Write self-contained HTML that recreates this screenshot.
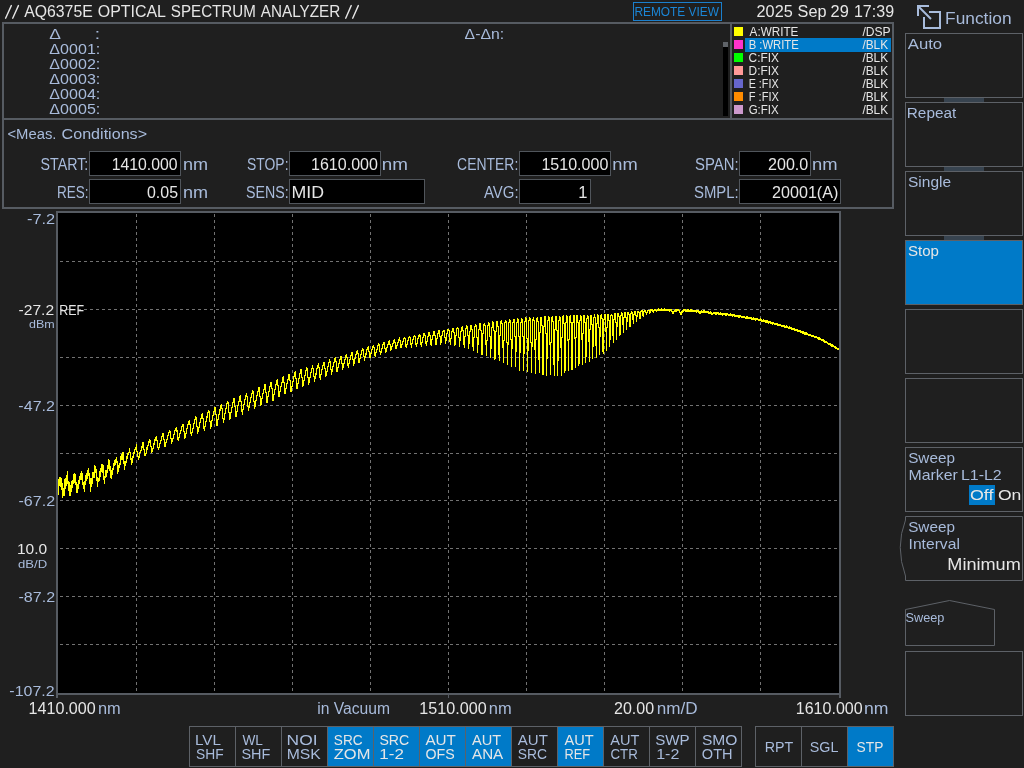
<!DOCTYPE html><html><head><meta charset="utf-8"><style>html,body{margin:0;padding:0;background:#1f1f1f;width:1024px;height:768px;overflow:hidden}svg{display:block;will-change:transform}text{font-family:"Liberation Sans",sans-serif;white-space:pre}</style></head><body>
<svg width="1024" height="768" viewBox="0 0 1024 768">
<rect x="0" y="0" width="1024" height="768" fill="#1f1f1f"/>
<path d="M5.6 18.2L11.3 5.6M12.7 18.2L18.4 5.6M345.7 18.2L351.2 5.6M352.7 18.2L358.3 5.6" stroke="#e6e6e6" stroke-width="1.4" stroke-linecap="round" fill="none"/>
<rect x="633.5" y="2.5" width="88" height="18" fill="none" stroke="#1b7fcc" stroke-width="1"/>
<g fill="none" stroke="#a8bcdc" stroke-width="2"><path d="M918 16V6H929"/><path d="M918 6L931 19"/><path d="M929 12H940V28H924V17"/></g>
<rect x="3" y="23" width="890" height="96" fill="none" stroke="#565b62" stroke-width="2"/>
<rect x="730" y="23" width="2" height="95" fill="#565b62"/>
<rect x="723" y="42" width="5" height="74" fill="#000"/>
<rect x="723" y="42" width="5" height="5" fill="#5f6368"/>
<rect x="734" y="27" width="9" height="9" fill="#ffff00"/>
<rect x="734" y="40" width="9" height="9" fill="#ff33cc"/>
<rect x="734" y="53" width="9" height="9" fill="#00ff00"/>
<rect x="734" y="66" width="9" height="9" fill="#ff9999"/>
<rect x="734" y="79" width="9" height="9" fill="#6666cc"/>
<rect x="734" y="92" width="9" height="9" fill="#ff8c00"/>
<rect x="734" y="105" width="9" height="9" fill="#cc99cc"/>
<rect x="745" y="38" width="146" height="14" fill="#007ac8"/>
<rect x="3" y="119" width="890" height="89" fill="none" stroke="#565b62" stroke-width="2"/>
<rect x="89.5" y="151.5" width="91" height="24" fill="#000" stroke="#50555b" stroke-width="1"/>
<rect x="89.5" y="179.5" width="91" height="24" fill="#000" stroke="#50555b" stroke-width="1"/>
<rect x="289.5" y="151.5" width="91" height="24" fill="#000" stroke="#50555b" stroke-width="1"/>
<rect x="289.5" y="179.5" width="135" height="24" fill="#000" stroke="#50555b" stroke-width="1"/>
<rect x="519.5" y="151.5" width="91" height="24" fill="#000" stroke="#50555b" stroke-width="1"/>
<rect x="519.5" y="179.5" width="71" height="24" fill="#000" stroke="#50555b" stroke-width="1"/>
<rect x="739.5" y="151.5" width="71" height="24" fill="#000" stroke="#50555b" stroke-width="1"/>
<rect x="739.5" y="179.5" width="101" height="24" fill="#000" stroke="#50555b" stroke-width="1"/>
<rect x="57" y="212" width="783" height="482" fill="#000" stroke="#565b62" stroke-width="2"/>
<rect x="56" y="694" width="2" height="4" fill="#565b62"/><rect x="839" y="694" width="2" height="4" fill="#565b62"/><rect x="448" y="695" width="1" height="3" fill="#565b62"/>
<path d="M136.5 214V693M214.5 214V693M292.5 214V693M370.5 214V693M448.5 214V693M526.5 214V693M604.5 214V693M682.5 214V693M760.5 214V693" stroke="#727272" stroke-width="1" stroke-dasharray="3 3" fill="none"/>
<path d="M58 261.5H838M58 309.5H838M58 357.5H838M58 405.5H838M58 453.5H838M58 500.5H838M58 548.5H838M58 596.5H838M58 644.5H838" stroke="#727272" stroke-width="1" stroke-dasharray="3 3" stroke-dashoffset="4" fill="none"/>
<path d="M58.5 479V495M59.5 477V486M60.5 477V487M61.5 478V490M62.5 483V498M63.5 488V496M64.5 479V496M65.5 478V489M66.5 475V486M67.5 471V484M68.5 481V491M69.5 482V496M70.5 485V496M71.5 481V492M72.5 480V488M73.5 474V484M74.5 473V483M75.5 474V485M76.5 482V493M77.5 484V493M78.5 480V489M79.5 476V484M80.5 473V480M81.5 471V480M82.5 473V485M83.5 482V489M84.5 481V492M85.5 475V485M86.5 473V481M87.5 470V479M88.5 468V476M89.5 473V484M90.5 478V492M91.5 478V487M92.5 472V484M93.5 472V478M94.5 465V478M95.5 466V473M96.5 469V481M97.5 477V487M98.5 478V482M99.5 471V481M100.5 468V477M101.5 464V472M102.5 464V473M103.5 465V480M104.5 476V484M105.5 470V478M106.5 470V477M107.5 465V473M108.5 459V469M109.5 460V471M110.5 466V478M111.5 470V479M112.5 468V475M113.5 463V470M114.5 460V466M115.5 459V465M116.5 457V463M117.5 461V474M118.5 465V472M119.5 463V468M120.5 456V465M121.5 454V460M122.5 452V460M123.5 452V464M124.5 461V470M125.5 461V466M126.5 456V463M127.5 453V459M128.5 452V455M129.5 448V453M130.5 452V460M131.5 458V465M132.5 456V463M133.5 452V458M134.5 449V454M135.5 447V450M136.5 444V452M137.5 451V457M138.5 456V460M139.5 452V458M140.5 450V453M141.5 446V451M142.5 442V448M143.5 442V450M144.5 449V456M145.5 453V456M146.5 447V454M147.5 445V450M148.5 441V446M149.5 439V443M150.5 440V447M151.5 446V453M152.5 448V452M153.5 443V449M154.5 439V445M155.5 437V441M156.5 436V441M157.5 440V448M158.5 447V450M159.5 443V448M160.5 440V444M161.5 436V441M162.5 433V437M163.5 433V440M164.5 439V447M165.5 442V447M166.5 439V443M167.5 435V440M168.5 432V436M169.5 430V433M170.5 431V439M171.5 438V444M172.5 438V442M173.5 434V439M174.5 430V435M175.5 428V431M176.5 427V432M177.5 430V440M178.5 437V441M179.5 433V438M180.5 430V434M181.5 426V431M182.5 424V427M183.5 424V432M184.5 431V439M185.5 433V438M186.5 428V434M187.5 424V429M188.5 421V425M189.5 420V425M190.5 424V434M191.5 432V436M192.5 428V433M193.5 423V429M194.5 419V424M195.5 416V420M196.5 417V427M197.5 426V434M198.5 427V432M199.5 422V428M200.5 418V423M201.5 414V419M202.5 413V419M203.5 418V429M204.5 426V431M205.5 421V427M206.5 416V422M207.5 412V418M208.5 410V413M209.5 411V422M210.5 421V429M211.5 420V427M212.5 415V421M213.5 411V416M214.5 407V412M215.5 407V415M216.5 414V426M217.5 419V426M218.5 414V420M219.5 409V415M220.5 405V411M221.5 404V409M222.5 408V419M223.5 418V423M224.5 413V420M225.5 408V414M226.5 403V409M227.5 401V404M228.5 402V413M229.5 412V420M230.5 412V419M231.5 407V413M232.5 402V408M233.5 398V403M234.5 398V407M235.5 406V417M236.5 411V417M237.5 405V412M238.5 401V406M239.5 396V402M240.5 395V402M241.5 401V412M242.5 409V415M243.5 404V410M244.5 399V405M245.5 395V400M246.5 393V397M247.5 396V407M248.5 406V411M249.5 402V408M250.5 397V403M251.5 393V398M252.5 390V394M253.5 391V402M254.5 401V409M255.5 400V407M256.5 395V401M257.5 391V396M258.5 387V392M259.5 387V397M260.5 396V406M261.5 398V405M262.5 393V399M263.5 389V394M264.5 384V390M265.5 384V393M266.5 392V403M267.5 396V403M268.5 391V397M269.5 386V392M270.5 382V387M271.5 382V389M272.5 388V401M273.5 394V401M274.5 389V395M275.5 384V390M276.5 380V385M277.5 379V386M278.5 385V397M279.5 391V397M280.5 386V392M281.5 382V387M282.5 377V383M283.5 376V383M284.5 382V394M285.5 388V394M286.5 383V389M287.5 379V384M288.5 374V380M289.5 374V381M290.5 380V392M291.5 386V392M292.5 381V387M293.5 376V382M294.5 372V377M295.5 371V379M296.5 378V389M297.5 383V389M298.5 378V384M299.5 373V379M300.5 369V374M301.5 369V378M302.5 377V387M303.5 380V386M304.5 375V381M305.5 370V376M306.5 367V371M307.5 368V378M308.5 377V385M309.5 377V383M310.5 372V378M311.5 368V373M312.5 365V369M313.5 368V377M314.5 376V382M315.5 373V379M316.5 368V375M317.5 365V369M318.5 363V368M319.5 367V378M320.5 374V380M321.5 369V375M322.5 365V370M323.5 362V366M324.5 362V369M325.5 368V377M326.5 371V376M327.5 366V372M328.5 362V367M329.5 359V363M330.5 361V370M331.5 369V375M332.5 366V372M333.5 362V367M334.5 358V363M335.5 357V362M336.5 361V372M337.5 367V372M338.5 363V368M339.5 359V364M340.5 356V360M341.5 356V364M342.5 363V370M343.5 363V368M344.5 359V364M345.5 355V360M346.5 354V358M347.5 357V366M348.5 363V368M349.5 359V364M350.5 355V360M351.5 352V356M352.5 352V360M353.5 359V366M354.5 358V364M355.5 354V359M356.5 351V355M357.5 350V354M358.5 353V363M359.5 358V363M360.5 354V359M361.5 350V355M362.5 348V351M363.5 349V357M364.5 356V361M365.5 353V358M366.5 349V355M367.5 347V350M368.5 346V352M369.5 351V358M370.5 353V358M371.5 349V354M372.5 346V350M373.5 345V348M374.5 347V356M375.5 352V357M376.5 349V353M377.5 345V350M378.5 343V346M379.5 344V352M380.5 351V355M381.5 348V353M382.5 344V349M383.5 342V345M384.5 342V349M385.5 348V353M386.5 347V352M387.5 344V348M388.5 341V345M389.5 340V345M390.5 344V351M391.5 346V350M392.5 343V347M393.5 340V344M394.5 339V343M395.5 342V349M396.5 345V349M397.5 342V346M398.5 339V343M399.5 337V341M400.5 340V348M401.5 344V348M402.5 341V345M403.5 338V342M404.5 337V339M405.5 338V347M406.5 344V348M407.5 340V345M408.5 337V341M409.5 336V338M410.5 337V345M411.5 343V348M412.5 339V344M413.5 336V340M414.5 335V337M415.5 336V345M416.5 343V347M417.5 338V344M418.5 335V339M419.5 334V337M420.5 335V345M421.5 342V347M422.5 337V343M423.5 333V338M424.5 333V336M425.5 335V344M426.5 341V346M427.5 336V342M428.5 332V337M429.5 332V336M430.5 335V345M431.5 339V346M432.5 335V340M433.5 331V336M434.5 331V336M435.5 335V345M436.5 338V345M437.5 333V339M438.5 330V334M439.5 330V337M440.5 336V345M441.5 335V343M442.5 331V336M443.5 330V332M444.5 330V338M445.5 337V344M446.5 333V341M447.5 329V334M448.5 329V331M449.5 330V342M450.5 338V345M451.5 331V339M452.5 328V332M453.5 328V333M454.5 332V346M455.5 335V345M456.5 328V336M457.5 327V329M458.5 328V338M459.5 337V347M460.5 331V341M461.5 327V332M462.5 326V331M463.5 330V345M464.5 336V348M465.5 328V337M466.5 325V329M467.5 326V336M468.5 335V349M469.5 331V344M470.5 325V332M471.5 325V330M472.5 329V347M473.5 337V351M474.5 326V338M475.5 324V327M476.5 325V338M477.5 337V353M478.5 329V345M479.5 323V330M480.5 323V331M481.5 330V355M482.5 333V355M483.5 324V334M484.5 323V326M485.5 325V345M486.5 340V356M487.5 325V341M488.5 322V326M489.5 323V337M490.5 336V358M491.5 327V349M492.5 321V328M493.5 322V331M494.5 330V360M495.5 331V359M496.5 321V332M497.5 321V327M498.5 326V355M499.5 335V361M500.5 321V336M501.5 320V324M502.5 323V348M503.5 340V363M504.5 322V341M505.5 320V323M506.5 321V343M507.5 342V365M508.5 322V345M509.5 319V323M510.5 320V340M511.5 339V367M512.5 322V349M513.5 319V323M514.5 319V337M515.5 336V367M516.5 322V352M517.5 318V323M518.5 319V337M519.5 336V371M520.5 322V353M521.5 318V323M522.5 319V337M523.5 336V371M524.5 321V354M525.5 317V322M526.5 318V339M527.5 338V372M528.5 320V351M529.5 317V321M530.5 318V343M531.5 342V373M532.5 319V347M533.5 317V321M534.5 320V350M535.5 339V374M536.5 318V340M537.5 317V322M538.5 321V360M539.5 332V373M540.5 317V333M541.5 317V326M542.5 325V375M543.5 326V375M544.5 316V327M545.5 316V334M546.5 333V376M547.5 320V359M548.5 316V321M549.5 317V345M550.5 342V375M551.5 317V343M552.5 316V322M553.5 321V365M554.5 329V376M555.5 316V330M556.5 316V331M557.5 330V376M558.5 320V361M559.5 316V321M560.5 317V348M561.5 337V376M562.5 316V338M563.5 315V324M564.5 323V373M565.5 322V371M566.5 315V323M567.5 316V341M568.5 339V371M569.5 316V340M570.5 315V323M571.5 322V370M572.5 322V370M573.5 315V323M574.5 315V339M575.5 337V368M576.5 315V338M577.5 315V323M578.5 322V366M579.5 320V364M580.5 315V321M581.5 316V340M582.5 333V365M583.5 315V334M584.5 315V323M585.5 322V363M586.5 318V357M587.5 315V319M588.5 316V342M589.5 329V362M590.5 315V330M591.5 315V325M592.5 324V359M593.5 317V347M594.5 314V318M595.5 317V346M596.5 323V358M597.5 314V324M598.5 315V328M599.5 327V355M600.5 315V337M601.5 314V319M602.5 318V352M603.5 319V354M604.5 314V320M605.5 314V332M606.5 327V351M607.5 314V328M608.5 314V321M609.5 320V347M610.5 315V340M611.5 314V316M612.5 315V336M613.5 319V343M614.5 313V320M615.5 313V323M616.5 322V340M617.5 313V327M618.5 313V317M619.5 316V336M620.5 315V335M621.5 312V316M622.5 313V325M623.5 317V333M624.5 312V318M625.5 312V318M626.5 317V330M627.5 312V322M628.5 312V315M629.5 314V327M630.5 313V327M631.5 311V314M632.5 312V320M633.5 314V324M634.5 311V315M635.5 311V316M636.5 315V322M637.5 311V317M638.5 311V313M639.5 312V319M640.5 311V319M641.5 310V312M642.5 310V316M643.5 311V317M644.5 310V312M645.5 310V313M646.5 312V315M647.5 310V313M648.5 310V311M649.5 310V314M650.5 309V313M651.5 309V311M652.5 309V312M653.5 310V313M654.5 309V311M655.5 309V311M656.5 310V312M657.5 309V311M658.5 308V311M659.5 309V311M660.5 309V311M661.5 308V311M662.5 309V311M663.5 309V311M664.5 308V311M665.5 309V311M666.5 309V311M667.5 309V311M668.5 309V311M669.5 309V312M670.5 309V311M671.5 309V312M672.5 311V314M673.5 311V314M674.5 310V312M675.5 309V312M676.5 309V312M677.5 309V311M678.5 309V311M679.5 310V313M680.5 312V315M681.5 311V315M682.5 310V313M683.5 309V312M684.5 309V311M685.5 309V312M686.5 310V312M687.5 309V312M688.5 309V312M689.5 310V312M690.5 309V312M691.5 309V312M692.5 310V312M693.5 310V312M694.5 310V312M695.5 310V312M696.5 310V313M697.5 310V312M698.5 310V313M699.5 311V314M700.5 311V314M701.5 310V313M702.5 311V313M703.5 310V313M704.5 310V313M705.5 311V313M706.5 311V313M707.5 311V313M708.5 311V314M709.5 312V314M710.5 311V314M711.5 312V315M712.5 313V315M713.5 312V314M714.5 312V314M715.5 312V315M716.5 312V315M717.5 312V314M718.5 312V315M719.5 313V315M720.5 312V315M721.5 313V315M722.5 313V316M723.5 313V315M724.5 313V315M725.5 313V316M726.5 313V316M727.5 313V315M728.5 314V316M729.5 314V316M730.5 313V316M731.5 314V316M732.5 314V317M733.5 314V316M734.5 314V317M735.5 315V317M736.5 315V317M737.5 315V317M738.5 315V318M739.5 315V318M740.5 315V317M741.5 316V318M742.5 316V318M743.5 316V318M744.5 316V318M745.5 317V319M746.5 316V319M747.5 316V319M748.5 317V319M749.5 317V319M750.5 317V319M751.5 317V320M752.5 318V320M753.5 317V320M754.5 318V320M755.5 318V321M756.5 318V320M757.5 318V320M758.5 319V321M759.5 319V321M760.5 318V321M761.5 319V322M762.5 320V322M763.5 319V322M764.5 320V322M765.5 320V323M766.5 320V323M767.5 320V323M768.5 321V324M769.5 321V323M770.5 321V324M771.5 322V324M772.5 322V325M773.5 322V324M774.5 323V325M775.5 323V325M776.5 323V325M777.5 323V326M778.5 324V326M779.5 324V326M780.5 324V326M781.5 325V327M782.5 325V327M783.5 325V327M784.5 325V328M785.5 326V328M786.5 325V328M787.5 326V328M788.5 327V329M789.5 326V329M790.5 327V329M791.5 327V330M792.5 328V330M793.5 328V330M794.5 328V331M795.5 329V331M796.5 329V331M797.5 329V332M798.5 330V332M799.5 330V332M800.5 330V333M801.5 331V333M802.5 331V334M803.5 331V334M804.5 332V335M805.5 332V335M806.5 332V335M807.5 333V335M808.5 334V336M809.5 334V336M810.5 334V336M811.5 335V337M812.5 335V337M813.5 335V337M814.5 336V338M815.5 336V338M816.5 336V338M817.5 337V339M818.5 337V340M819.5 337V340M820.5 338V340M821.5 339V341M822.5 339V341M823.5 339V342M824.5 340V343M825.5 341V343M826.5 341V343M827.5 342V344M828.5 343V345M829.5 343V345M830.5 343V346M831.5 344V347M832.5 344V347M833.5 345V347M834.5 346V348M835.5 346V349M836.5 347V349M837.5 348V350M838.5 348V350" stroke="#ffff00" stroke-width="1" fill="none" shape-rendering="crispEdges"/>
<rect x="905.5" y="33.5" width="117" height="64" fill="none" stroke="#5d6167" stroke-width="1"/>
<rect x="905.5" y="102.5" width="117" height="64" fill="none" stroke="#5d6167" stroke-width="1"/>
<rect x="905.5" y="171.5" width="117" height="64" fill="none" stroke="#5d6167" stroke-width="1"/>
<rect x="905.5" y="240.5" width="117" height="64" fill="#007ac8" stroke="#5d6167" stroke-width="1"/>
<rect x="905.5" y="309.5" width="117" height="64" fill="none" stroke="#5d6167" stroke-width="1"/>
<rect x="905.5" y="378.5" width="117" height="64" fill="none" stroke="#5d6167" stroke-width="1"/>
<rect x="905.5" y="447.5" width="117" height="64" fill="none" stroke="#5d6167" stroke-width="1"/>
<path d="M905.5 516.5H1022.5V580.5H905.5V576Q895 547 905.5 520Z" fill="none" stroke="#5d6167" stroke-width="1"/>
<rect x="944" y="98" width="40" height="4" fill="#37434f"/>
<rect x="944" y="167" width="40" height="4" fill="#37434f"/>
<rect x="944" y="236" width="40" height="4" fill="#37434f"/>
<rect x="969" y="485" width="26" height="20" fill="#007ac8"/>
<path d="M905.5 609.5L949.5 600.5L994.5 609.5V645.5H905.5Z" fill="none" stroke="#5d6167" stroke-width="1"/>
<rect x="905.5" y="651.5" width="117" height="64" fill="none" stroke="#5d6167" stroke-width="1"/>
<rect x="189.5" y="726.5" width="46" height="40" fill="#1f1f1f" stroke="#5d6167" stroke-width="1"/>
<rect x="235.5" y="726.5" width="46" height="40" fill="#1f1f1f" stroke="#5d6167" stroke-width="1"/>
<rect x="281.5" y="726.5" width="46" height="40" fill="#1f1f1f" stroke="#5d6167" stroke-width="1"/>
<rect x="327.5" y="726.5" width="46" height="40" fill="#007ac8" stroke="#5d6167" stroke-width="1"/>
<rect x="373.5" y="726.5" width="46" height="40" fill="#007ac8" stroke="#5d6167" stroke-width="1"/>
<rect x="419.5" y="726.5" width="46" height="40" fill="#007ac8" stroke="#5d6167" stroke-width="1"/>
<rect x="465.5" y="726.5" width="46" height="40" fill="#007ac8" stroke="#5d6167" stroke-width="1"/>
<rect x="511.5" y="726.5" width="46" height="40" fill="#1f1f1f" stroke="#5d6167" stroke-width="1"/>
<rect x="557.5" y="726.5" width="46" height="40" fill="#007ac8" stroke="#5d6167" stroke-width="1"/>
<rect x="603.5" y="726.5" width="46" height="40" fill="#1f1f1f" stroke="#5d6167" stroke-width="1"/>
<rect x="649.5" y="726.5" width="46" height="40" fill="#1f1f1f" stroke="#5d6167" stroke-width="1"/>
<rect x="695.5" y="726.5" width="46" height="40" fill="#1f1f1f" stroke="#5d6167" stroke-width="1"/>
<rect x="755.5" y="726.5" width="46" height="40" fill="#1f1f1f" stroke="#5d6167" stroke-width="1"/>
<rect x="801.5" y="726.5" width="46" height="40" fill="#1f1f1f" stroke="#5d6167" stroke-width="1"/>
<rect x="847.5" y="726.5" width="46" height="40" fill="#007ac8" stroke="#5d6167" stroke-width="1"/>
<text x="24.20" y="16.50" font-size="16" fill="#e6e6e6" textLength="68.57" lengthAdjust="spacingAndGlyphs">AQ6375E</text>
<text x="97.80" y="16.50" font-size="16" fill="#e6e6e6" textLength="68.17" lengthAdjust="spacingAndGlyphs">OPTICAL</text>
<text x="170.83" y="16.50" font-size="16" fill="#e6e6e6" textLength="84.99" lengthAdjust="spacingAndGlyphs">SPECTRUM</text>
<text x="260.80" y="16.50" font-size="16" fill="#e6e6e6" textLength="79.42" lengthAdjust="spacingAndGlyphs">ANALYZER</text>
<text x="634.47" y="15.70" font-size="12.6" fill="#1b86d6" textLength="84.47" lengthAdjust="spacingAndGlyphs">REMOTE VIEW</text>
<text x="756.57" y="16.60" font-size="15.6" fill="#e6e6e6" textLength="36.18" lengthAdjust="spacingAndGlyphs">2025</text>
<text x="797.57" y="16.60" font-size="15.6" fill="#e6e6e6" textLength="28.92" lengthAdjust="spacingAndGlyphs">Sep</text>
<text x="830.56" y="16.60" font-size="15.6" fill="#e6e6e6" textLength="18.23" lengthAdjust="spacingAndGlyphs">29</text>
<text x="853.96" y="16.60" font-size="15.6" fill="#e6e6e6" textLength="40.09" lengthAdjust="spacingAndGlyphs">17:39</text>
<text x="945.10" y="23.60" font-size="16.2" fill="#a8bbdb" textLength="66.44" lengthAdjust="spacingAndGlyphs">Function</text>
<text x="49.28" y="39.00" font-size="15.3" fill="#a8bbdb" textLength="11.69" lengthAdjust="spacingAndGlyphs">Δ</text>
<text x="94.75" y="39.00" font-size="15.3" fill="#a8bbdb" textLength="5.31" lengthAdjust="spacingAndGlyphs">:</text>
<text x="49.36" y="54.00" font-size="15.3" fill="#a8bbdb" textLength="50.93" lengthAdjust="spacingAndGlyphs">Δ0001:</text>
<text x="49.36" y="69.00" font-size="15.3" fill="#a8bbdb" textLength="50.93" lengthAdjust="spacingAndGlyphs">Δ0002:</text>
<text x="49.36" y="84.00" font-size="15.3" fill="#a8bbdb" textLength="50.93" lengthAdjust="spacingAndGlyphs">Δ0003:</text>
<text x="49.36" y="99.00" font-size="15.3" fill="#a8bbdb" textLength="50.93" lengthAdjust="spacingAndGlyphs">Δ0004:</text>
<text x="49.36" y="114.00" font-size="15.3" fill="#a8bbdb" textLength="50.93" lengthAdjust="spacingAndGlyphs">Δ0005:</text>
<text x="464.59" y="38.80" font-size="15.3" fill="#a8bbdb" textLength="39.54" lengthAdjust="spacingAndGlyphs">Δ-Δn:</text>
<text x="749.59" y="36.00" font-size="12.2" fill="#e6e6e6" textLength="48.79" lengthAdjust="spacingAndGlyphs">A:WRITE</text>
<text x="862.40" y="36.00" font-size="12.2" fill="#e6e6e6" textLength="28.25" lengthAdjust="spacingAndGlyphs">/DSP</text>
<text x="748.65" y="49.00" font-size="12.2" fill="#e6e6e6" textLength="50.08" lengthAdjust="spacingAndGlyphs">B :WRITE</text>
<text x="862.39" y="49.00" font-size="12.2" fill="#e6e6e6" textLength="25.73" lengthAdjust="spacingAndGlyphs">/BLK</text>
<text x="748.62" y="62.00" font-size="12.2" fill="#e6e6e6" textLength="30.33" lengthAdjust="spacingAndGlyphs">C:FIX</text>
<text x="862.39" y="62.00" font-size="12.2" fill="#e6e6e6" textLength="25.73" lengthAdjust="spacingAndGlyphs">/BLK</text>
<text x="748.62" y="75.00" font-size="12.2" fill="#e6e6e6" textLength="30.33" lengthAdjust="spacingAndGlyphs">D:FIX</text>
<text x="862.39" y="75.00" font-size="12.2" fill="#e6e6e6" textLength="25.73" lengthAdjust="spacingAndGlyphs">/BLK</text>
<text x="748.68" y="88.00" font-size="12.2" fill="#e6e6e6" textLength="29.97" lengthAdjust="spacingAndGlyphs">E :FIX</text>
<text x="862.39" y="88.00" font-size="12.2" fill="#e6e6e6" textLength="25.73" lengthAdjust="spacingAndGlyphs">/BLK</text>
<text x="748.66" y="101.00" font-size="12.2" fill="#e6e6e6" textLength="30.28" lengthAdjust="spacingAndGlyphs">F :FIX</text>
<text x="862.39" y="101.00" font-size="12.2" fill="#e6e6e6" textLength="25.73" lengthAdjust="spacingAndGlyphs">/BLK</text>
<text x="748.64" y="114.00" font-size="12.2" fill="#e6e6e6" textLength="29.98" lengthAdjust="spacingAndGlyphs">G:FIX</text>
<text x="862.39" y="114.00" font-size="12.2" fill="#e6e6e6" textLength="25.73" lengthAdjust="spacingAndGlyphs">/BLK</text>
<text x="7.43" y="139.00" font-size="15.4" fill="#a8bbdb" textLength="49.04" lengthAdjust="spacingAndGlyphs">&lt;Meas.</text>
<text x="61.57" y="139.00" font-size="15.4" fill="#a8bbdb" textLength="85.50" lengthAdjust="spacingAndGlyphs">Conditions&gt;</text>
<text x="40.51" y="170.00" font-size="15.6" fill="#a8bbdb" textLength="47.79" lengthAdjust="spacingAndGlyphs">START:</text>
<text x="56.95" y="197.60" font-size="15.6" fill="#a8bbdb" textLength="31.59" lengthAdjust="spacingAndGlyphs">RES:</text>
<text x="111.63" y="170.00" font-size="16.5" fill="#e6e6e6" textLength="65.89" lengthAdjust="spacingAndGlyphs">1410.000</text>
<text x="147.02" y="197.60" font-size="16.5" fill="#e6e6e6" textLength="30.99" lengthAdjust="spacingAndGlyphs">0.05</text>
<text x="182.90" y="170.00" font-size="16.5" fill="#a8bbdb" textLength="25.10" lengthAdjust="spacingAndGlyphs">nm</text>
<text x="182.90" y="197.60" font-size="16.5" fill="#a8bbdb" textLength="25.10" lengthAdjust="spacingAndGlyphs">nm</text>
<text x="247.05" y="170.00" font-size="15.6" fill="#a8bbdb" textLength="41.45" lengthAdjust="spacingAndGlyphs">STOP:</text>
<text x="246.04" y="197.60" font-size="15.6" fill="#a8bbdb" textLength="42.74" lengthAdjust="spacingAndGlyphs">SENS:</text>
<text x="311.04" y="170.00" font-size="16.5" fill="#e6e6e6" textLength="66.88" lengthAdjust="spacingAndGlyphs">1610.000</text>
<text x="291.55" y="197.60" font-size="16.5" fill="#e6e6e6" textLength="32.54" lengthAdjust="spacingAndGlyphs">MID</text>
<text x="381.86" y="170.00" font-size="16.5" fill="#a8bbdb" textLength="26.20" lengthAdjust="spacingAndGlyphs">nm</text>
<text x="457.11" y="170.00" font-size="15.6" fill="#a8bbdb" textLength="61.19" lengthAdjust="spacingAndGlyphs">CENTER:</text>
<text x="484.02" y="197.60" font-size="15.6" fill="#a8bbdb" textLength="34.52" lengthAdjust="spacingAndGlyphs">AVG:</text>
<text x="541.44" y="170.00" font-size="16.5" fill="#e6e6e6" textLength="66.88" lengthAdjust="spacingAndGlyphs">1510.000</text>
<text x="582.80" y="197.60" font-size="16.5" fill="#e6e6e6" text-anchor="middle">1</text>
<text x="612.26" y="170.00" font-size="16.5" fill="#a8bbdb" textLength="25.43" lengthAdjust="spacingAndGlyphs">nm</text>
<text x="695.02" y="170.00" font-size="15.6" fill="#a8bbdb" textLength="43.57" lengthAdjust="spacingAndGlyphs">SPAN:</text>
<text x="694.02" y="197.60" font-size="15.6" fill="#a8bbdb" textLength="44.72" lengthAdjust="spacingAndGlyphs">SMPL:</text>
<text x="768.01" y="170.00" font-size="16.5" fill="#e6e6e6" textLength="40.26" lengthAdjust="spacingAndGlyphs">200.0</text>
<text x="772.01" y="197.60" font-size="16.5" fill="#e6e6e6" textLength="66.37" lengthAdjust="spacingAndGlyphs">20001(A)</text>
<text x="812.04" y="170.00" font-size="16.5" fill="#a8bbdb" textLength="25.54" lengthAdjust="spacingAndGlyphs">nm</text>
<text x="26.97" y="224.00" font-size="15.5" fill="#a8bbdb" textLength="28.21" lengthAdjust="spacingAndGlyphs">-7.2</text>
<text x="18.50" y="315.00" font-size="15.5" fill="#e6e6e6" textLength="35.60" lengthAdjust="spacingAndGlyphs">-27.2</text>
<text x="59.20" y="315.00" font-size="15.5" fill="#e6e6e6" textLength="24.80" lengthAdjust="spacingAndGlyphs">REF</text>
<text x="29.00" y="327.80" font-size="11.3" fill="#a8bbdb" textLength="25.66" lengthAdjust="spacingAndGlyphs">dBm</text>
<text x="18.39" y="410.80" font-size="15.5" fill="#a8bbdb" textLength="36.59" lengthAdjust="spacingAndGlyphs">-47.2</text>
<text x="18.49" y="506.00" font-size="15.5" fill="#a8bbdb" textLength="36.64" lengthAdjust="spacingAndGlyphs">-67.2</text>
<text x="17.00" y="554.00" font-size="15.5" fill="#e6e6e6" textLength="30.17" lengthAdjust="spacingAndGlyphs">10.0</text>
<text x="18.00" y="567.70" font-size="11.3" fill="#a8bbdb" textLength="29.14" lengthAdjust="spacingAndGlyphs">dB/D</text>
<text x="18.49" y="601.70" font-size="15.5" fill="#a8bbdb" textLength="36.64" lengthAdjust="spacingAndGlyphs">-87.2</text>
<text x="9.39" y="695.80" font-size="15.5" fill="#a8bbdb" textLength="45.18" lengthAdjust="spacingAndGlyphs">-107.2</text>
<text x="28.59" y="714.00" font-size="16" fill="#e6e6e6" textLength="67.15" lengthAdjust="spacingAndGlyphs">1410.000</text>
<text x="97.99" y="714.00" font-size="16" fill="#a8bbdb" textLength="22.76" lengthAdjust="spacingAndGlyphs">nm</text>
<text x="317.21" y="713.70" font-size="16" fill="#a8bbdb" textLength="72.78" lengthAdjust="spacingAndGlyphs">in Vacuum</text>
<text x="419.39" y="714.00" font-size="16" fill="#e6e6e6" textLength="67.35" lengthAdjust="spacingAndGlyphs">1510.000</text>
<text x="488.78" y="714.00" font-size="16" fill="#a8bbdb" textLength="22.87" lengthAdjust="spacingAndGlyphs">nm</text>
<text x="614.00" y="714.00" font-size="16" fill="#e6e6e6" textLength="40.05" lengthAdjust="spacingAndGlyphs">20.00</text>
<text x="656.76" y="714.00" font-size="16" fill="#a8bbdb" textLength="40.92" lengthAdjust="spacingAndGlyphs">nm/D</text>
<text x="795.80" y="714.00" font-size="16" fill="#e6e6e6" textLength="66.84" lengthAdjust="spacingAndGlyphs">1610.000</text>
<text x="863.90" y="714.00" font-size="16" fill="#a8bbdb" textLength="24.46" lengthAdjust="spacingAndGlyphs">nm</text>
<text x="907.75" y="49.00" font-size="15.4" fill="#a8bbdb" textLength="34.42" lengthAdjust="spacingAndGlyphs">Auto</text>
<text x="906.81" y="117.80" font-size="15.4" fill="#a8bbdb" textLength="49.43" lengthAdjust="spacingAndGlyphs">Repeat</text>
<text x="908.00" y="186.80" font-size="15.4" fill="#a8bbdb" textLength="43.10" lengthAdjust="spacingAndGlyphs">Single</text>
<text x="908.01" y="256.00" font-size="15.4" fill="#e6e6e6" textLength="30.96" lengthAdjust="spacingAndGlyphs">Stop</text>
<text x="908.19" y="463.00" font-size="14.8" fill="#a8bbdb" textLength="46.69" lengthAdjust="spacingAndGlyphs">Sweep</text>
<text x="908.55" y="480.00" font-size="14.8" fill="#a8bbdb" textLength="49.32" lengthAdjust="spacingAndGlyphs">Marker</text>
<text x="960.92" y="480.00" font-size="14.8" fill="#a8bbdb" textLength="40.80" lengthAdjust="spacingAndGlyphs">L1-L2</text>
<text x="969.92" y="500.00" font-size="15.5" fill="#e6e6e6" textLength="23.45" lengthAdjust="spacingAndGlyphs">Off</text>
<text x="997.93" y="500.00" font-size="15.5" fill="#e6e6e6" textLength="23.41" lengthAdjust="spacingAndGlyphs">On</text>
<text x="908.19" y="532.00" font-size="14.8" fill="#a8bbdb" textLength="46.69" lengthAdjust="spacingAndGlyphs">Sweep</text>
<text x="908.56" y="549.00" font-size="14.8" fill="#a8bbdb" textLength="51.32" lengthAdjust="spacingAndGlyphs">Interval</text>
<text x="947.34" y="569.60" font-size="16" fill="#e6e6e6" textLength="73.39" lengthAdjust="spacingAndGlyphs">Minimum</text>
<text x="905.56" y="622.00" font-size="12.3" fill="#a8bbdb" textLength="38.86" lengthAdjust="spacingAndGlyphs">Sweep</text>
<text x="195.01" y="744.80" font-size="15.4" fill="#a8bbdb" textLength="26.03" lengthAdjust="spacingAndGlyphs">LVL</text>
<text x="196.05" y="758.70" font-size="15.4" fill="#a8bbdb" textLength="27.61" lengthAdjust="spacingAndGlyphs">SHF</text>
<text x="242.38" y="744.80" font-size="15.4" fill="#a8bbdb" textLength="20.48" lengthAdjust="spacingAndGlyphs">WL</text>
<text x="241.45" y="758.70" font-size="15.4" fill="#a8bbdb" textLength="28.89" lengthAdjust="spacingAndGlyphs">SHF</text>
<text x="286.59" y="744.80" font-size="15.4" fill="#a8bbdb" textLength="30.91" lengthAdjust="spacingAndGlyphs">NOI</text>
<text x="286.76" y="758.70" font-size="15.4" fill="#a8bbdb" textLength="34.11" lengthAdjust="spacingAndGlyphs">MSK</text>
<text x="333.87" y="744.80" font-size="15.4" fill="#e6e6e6" textLength="28.73" lengthAdjust="spacingAndGlyphs">SRC</text>
<text x="333.76" y="758.70" font-size="15.4" fill="#e6e6e6" textLength="36.66" lengthAdjust="spacingAndGlyphs">ZOM</text>
<text x="379.47" y="744.80" font-size="15.4" fill="#e6e6e6" textLength="29.77" lengthAdjust="spacingAndGlyphs">SRC</text>
<text x="379.32" y="758.70" font-size="15.4" fill="#e6e6e6" textLength="24.58" lengthAdjust="spacingAndGlyphs">1-2</text>
<text x="425.40" y="744.80" font-size="15.4" fill="#e6e6e6" textLength="30.49" lengthAdjust="spacingAndGlyphs">AUT</text>
<text x="425.46" y="758.70" font-size="15.4" fill="#e6e6e6" textLength="29.21" lengthAdjust="spacingAndGlyphs">OFS</text>
<text x="472.00" y="744.80" font-size="15.4" fill="#e6e6e6" textLength="29.21" lengthAdjust="spacingAndGlyphs">AUT</text>
<text x="472.00" y="758.70" font-size="15.4" fill="#e6e6e6" textLength="31.26" lengthAdjust="spacingAndGlyphs">ANA</text>
<text x="517.80" y="744.80" font-size="15.4" fill="#a8bbdb" textLength="30.08" lengthAdjust="spacingAndGlyphs">AUT</text>
<text x="517.86" y="758.70" font-size="15.4" fill="#a8bbdb" textLength="29.25" lengthAdjust="spacingAndGlyphs">SRC</text>
<text x="564.58" y="744.80" font-size="15.4" fill="#e6e6e6" textLength="29.11" lengthAdjust="spacingAndGlyphs">AUT</text>
<text x="564.54" y="758.70" font-size="15.4" fill="#e6e6e6" textLength="25.59" lengthAdjust="spacingAndGlyphs">REF</text>
<text x="610.19" y="744.80" font-size="15.4" fill="#a8bbdb" textLength="29.11" lengthAdjust="spacingAndGlyphs">AUT</text>
<text x="610.44" y="758.70" font-size="15.4" fill="#a8bbdb" textLength="27.32" lengthAdjust="spacingAndGlyphs">CTR</text>
<text x="655.21" y="744.80" font-size="15.4" fill="#a8bbdb" textLength="34.53" lengthAdjust="spacingAndGlyphs">SWP</text>
<text x="656.16" y="758.70" font-size="15.4" fill="#a8bbdb" textLength="23.20" lengthAdjust="spacingAndGlyphs">1-2</text>
<text x="701.99" y="744.80" font-size="15.4" fill="#a8bbdb" textLength="35.47" lengthAdjust="spacingAndGlyphs">SMO</text>
<text x="701.86" y="758.70" font-size="15.4" fill="#a8bbdb" textLength="30.77" lengthAdjust="spacingAndGlyphs">OTH</text>
<text x="764.70" y="751.90" font-size="15.5" fill="#a8bbdb" textLength="28.54" lengthAdjust="spacingAndGlyphs">RPT</text>
<text x="809.69" y="751.90" font-size="15.5" fill="#a8bbdb" textLength="28.66" lengthAdjust="spacingAndGlyphs">SGL</text>
<text x="856.54" y="751.90" font-size="15.5" fill="#e6e6e6" textLength="26.82" lengthAdjust="spacingAndGlyphs">STP</text>
</svg></body></html>
